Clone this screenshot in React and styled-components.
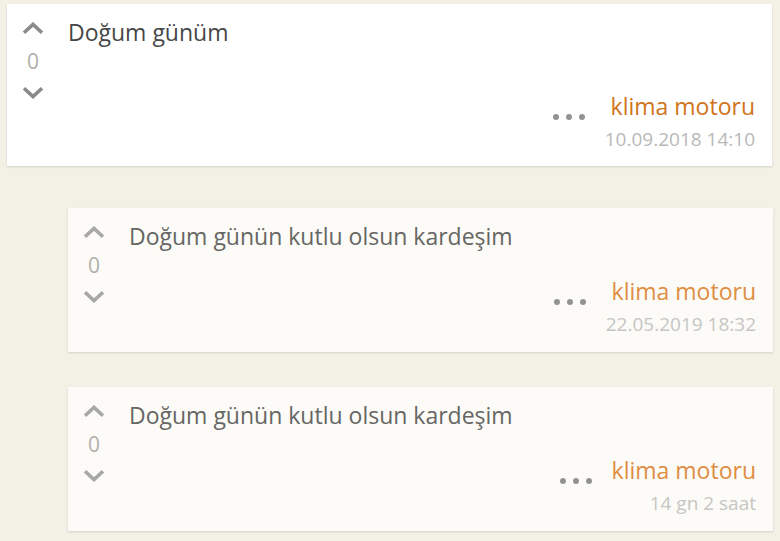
import React from 'react';
import styled, { createGlobalStyle } from 'styled-components';

const GlobalStyle = createGlobalStyle`
  html, body {
    margin: 0;
    padding: 0;
    background: #f3f1e6;
    font-family: "Open Sans", "Noto Sans", sans-serif;
    overflow: hidden;
  }
`;

const entries = [
  {
    id: 1,
    text: 'Doğum günüm',
    author: 'klima motoru',
    date: '10.09.2018 14:10',
    votes: 0,
    root: true,
  },
  {
    id: 2,
    text: 'Doğum günün kutlu olsun kardeşim',
    author: 'klima motoru',
    date: '22.05.2019 18:32',
    votes: 0,
  },
  {
    id: 3,
    text: 'Doğum günün kutlu olsun kardeşim',
    author: 'klima motoru',
    date: '14 gn 2 saat',
    votes: 0,
  },
];

const Chevron = ({ down }) => (
  <svg width="22" height="13" viewBox="0 0 22 13" fill="none">
    <path
      d={down ? 'M2 2.2 L11 10.6 L20 2.2' : 'M2 10.8 L11 2.4 L20 10.8'}
      stroke="currentColor"
      strokeWidth="3.6"
    />
  </svg>
);

const Entry = ({ entry }) => (
  <Card $root={entry.root}>
    <Votes $root={entry.root}>
      <VoteButton><Chevron /></VoteButton>
      <Count>{entry.votes}</Count>
      <VoteButton><Chevron down /></VoteButton>
    </Votes>
    <Body>
      <Text $root={entry.root}>{entry.text}</Text>
      <Footer>
        <Dots>
          <span /><span /><span />
        </Dots>
        <Meta>
          <Author $root={entry.root}>{entry.author}</Author>
          <Date $root={entry.root}>{entry.date}</Date>
        </Meta>
      </Footer>
    </Body>
  </Card>
);

const App = () => (
  <>
    <GlobalStyle />
    <Page>
      {entries.map((e) => (
        <Entry key={e.id} entry={e} />
      ))}
    </Page>
  </>
);

export default App;

const Page = styled.div`
  display: flex;
  flex-direction: column;
  padding: 4px 7px 0 7px;
`;

const Card = styled.div`
  display: flex;
  background: ${(p) => (p.$root ? '#ffffff' : '#fcfbf7')};
  box-shadow: 0 1px 2px rgba(0, 0, 0, 0.13);
  margin: ${(p) => (p.$root ? '0 1px 42px 0' : '0 0 35px 61px')};
  height: ${(p) => (p.$root ? '162px' : '144px')};
  flex-shrink: 0;
  box-sizing: border-box;
  padding: 13px 17px 0 0;
`;

const Votes = styled.div`
  width: 52px;
  flex-shrink: 0;
  display: flex;
  flex-direction: column;
  align-items: center;
  padding-top: 5px;
  color: ${(p) => (p.$root ? '#8a8a8a' : '#a8a8a4')};
`;

const VoteButton = styled.div`
  display: flex;
  height: 13px;
`;

const Count = styled.div`
  font-size: 21px;
  line-height: 24px;
  margin: 14px 0 13px;
  color: #b0b0ab;
`;

const Body = styled.div`
  flex: 1;
  display: flex;
  flex-direction: column;
  padding-left: 9px;
`;

const Text = styled.div`
  font-size: 23px;
  line-height: 30px;
  color: ${(p) => (p.$root ? '#474747' : '#666664')};
  min-height: ${(p) => (p.$root ? '75px' : '56px')};
`;

const Footer = styled.div`
  display: flex;
  justify-content: flex-end;
  align-items: flex-start;
  gap: 20px;
`;

const Dots = styled.div`
  display: flex;
  gap: 7px;
  margin-top: 22px;

  span {
    width: 6px;
    height: 6px;
    border-radius: 50%;
    background: #939393;
  }
`;

const Meta = styled.div`
  display: flex;
  flex-direction: column;
  align-items: flex-end;
`;

const Author = styled.div`
  font-size: 23px;
  line-height: 28px;
  color: ${(p) => (p.$root ? '#d0741a' : '#e08d43')};
`;

const Date = styled.div`
  font-size: 19px;
  line-height: 26px;
  margin-top: 6px;
  color: ${(p) => (p.$root ? '#b8b8b8' : '#c6c6c3')};
`;
